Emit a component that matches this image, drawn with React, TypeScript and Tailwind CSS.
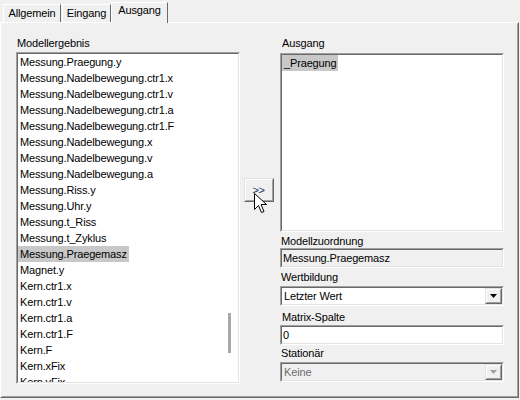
const left = [
  'Messung.Praegung.y',
  'Messung.Nadelbewegung.ctr1.x',
  'Messung.Nadelbewegung.ctr1.v',
  'Messung.Nadelbewegung.ctr1.a',
  'Messung.Nadelbewegung.ctr1.F',
  'Messung.Nadelbewegung.x',
  'Messung.Nadelbewegung.v',
  'Messung.Nadelbewegung.a',
  'Messung.Riss.y',
  'Messung.Uhr.y',
  'Messung.t_Riss',
  'Messung.t_Zyklus',
  'Messung.Praegemasz',
  'Magnet.y',
  'Kern.ctr1.x',
  'Kern.ctr1.v',
  'Kern.ctr1.a',
  'Kern.ctr1.F',
  'Kern.F',
  'Kern.xFix',
  'Kern.yFix',
]

// classic sunken 3D frame (two pixel)
function Sunken({ className = '', children }: { className?: string; children?: React.ReactNode }) {
  return (
    <div className={`border border-t-[#a0a0a0] border-l-[#a0a0a0] border-r-white border-b-white ${className}`}>
      <div className="h-full border border-t-[#696969] border-l-[#696969] border-r-[#e3e3e3] border-b-[#e3e3e3]">
        {children}
      </div>
    </div>
  )
}

function Arrow({ disabled }: { disabled?: boolean }) {
  return (
    <div className="w-[17px] h-full border border-t-[#e3e3e3] border-l-[#e3e3e3] border-r-[#696969] border-b-[#696969] bg-[#f0f0f0]">
      <div className="h-full flex items-center justify-center border border-t-white border-l-white border-r-[#a0a0a0] border-b-[#a0a0a0]">
        <svg width="7" height="4" viewBox="0 0 7 4">
          <path d="M0 0h7L3.5 4z" fill={disabled ? '#a0a0a0' : '#000'} />
        </svg>
      </div>
    </div>
  )
}

function Tab({ label, active, w }: { label: string; active?: boolean; w: string }) {
  return (
    <div
      className={`${w} ${active ? 'h-[21px] -mb-px z-10 pt-[1px]' : 'h-[18px] pt-[2px]'} relative bg-[#f0f0f0] border-l border-t border-l-white border-t-white border-r border-r-[#696969] text-center`}
    >
      {label}
    </div>
  )
}

export default function App() {
  return (
    <div
      className="w-[520px] h-[400px] bg-[#f0f0f0] text-[11px] leading-[13px] tracking-[-0.15px] text-black overflow-hidden relative"
      style={{ fontFamily: '"Liberation Sans", Arial, sans-serif' }}
    >
      <div className="h-[22px] flex items-end pl-[3px]">
        <Tab label="Allgemein" w="w-[58px]" />
        <Tab label="Eingang" w="w-[49px] ml-[1px]" />
        <Tab label="Ausgang" active w="w-[57px]" />
      </div>

      <div className="w-[519px] h-[376px] border border-l-white border-t-white border-r-[#696969] border-b-[#696969]">
        <div className="h-full border border-transparent border-r-[#a0a0a0] border-b-[#a0a0a0] flex pl-[14px] pt-[13px]">
          {/* Modellergebnis */}
          <div className="w-[224px] flex flex-col">
            <div className="pl-[1px] h-[13px]">Modellergebnis</div>
            <Sunken className="mt-[2px] h-[332px] bg-white">
              <div className="h-full flex overflow-hidden">
                <div className="flex-1">
                  {left.map((t) => (
                    <div key={t} className="h-[16px] flex items-center">
                      <span
                        className={`px-[2px] h-[16px] leading-[16px] ${t === 'Messung.Praegemasz' ? 'bg-[#c8c8c8]' : ''}`}
                      >
                        {t}
                      </span>
                    </div>
                  ))}
                </div>
                <div className="w-[17px] flex justify-center">
                  <div className="w-[3px] h-[40px] mt-[259px] bg-[#a8a8a8]" />
                </div>
              </div>
            </Sunken>
          </div>

          {/* transfer button */}
          <div className="w-[40px] flex justify-center pt-[141px]">
            <div className="relative w-[30px] h-[24px] mr-[3px] border border-t-[#e3e3e3] border-l-[#e3e3e3] border-r-[#696969] border-b-[#696969]">
              <div className="h-full border border-t-white border-l-white border-r-[#a0a0a0] border-b-[#a0a0a0] flex items-center justify-center text-[#1c2f6e] tracking-[-0.5px]">
                &gt;&gt;
              </div>
              <svg className="absolute left-[9px] top-[14px]" width="13" height="21" viewBox="0 0 13 21">
                <path
                  d="M0.5 0.5 L0.5 16.5 L4.5 12.5 L7.5 19.5 L10 18.5 L7 11.5 L12.5 11.5 Z"
                  fill="#fff"
                  stroke="#000"
                  strokeWidth="1"
                  strokeLinejoin="miter"
                />
              </svg>
            </div>
          </div>

          {/* Ausgang */}
          <div className="w-[224px] flex flex-col">
            <div className="pl-[2px] h-[13px]">Ausgang</div>
            <Sunken className="mt-[3px] h-[179px] bg-white">
              <div className="h-[16px] flex items-center">
                <span className="px-[2px] h-[16px] leading-[16px] bg-[#c8c8c8]">_Praegung</span>
              </div>
            </Sunken>

            <div className="mt-[3px] pl-[1px] h-[13px]">Modellzuordnung</div>
            <Sunken className="h-[20px] bg-[#f0f0f0]">
              <div className="h-full flex items-center pl-[1px]">Messung.Praegemasz</div>
            </Sunken>

            <div className="mt-[3px] pl-[1px] h-[13px]">Wertbildung</div>
            <Sunken className="mt-[2px] h-[20px] bg-white">
              <div className="h-full flex items-center">
                <span className="flex-1 pl-[2px]">Letzter Wert</span>
                <Arrow />
              </div>
            </Sunken>

            <div className="mt-[5px] pl-[2px] h-[13px]">Matrix-Spalte</div>
            <Sunken className="mt-[1px] h-[20px] bg-white">
              <div className="h-full flex items-center pl-[1px]">0</div>
            </Sunken>

            <div className="mt-[2px] pl-[1px] h-[13px]">Stationär</div>
            <Sunken className="mt-[2px] h-[20px] bg-[#f0f0f0]">
              <div className="h-full flex items-center text-[#6d6d6d]">
                <span className="flex-1 pl-[2px]">Keine</span>
                <Arrow disabled />
              </div>
            </Sunken>
          </div>
        </div>
      </div>
    </div>
  )
}
